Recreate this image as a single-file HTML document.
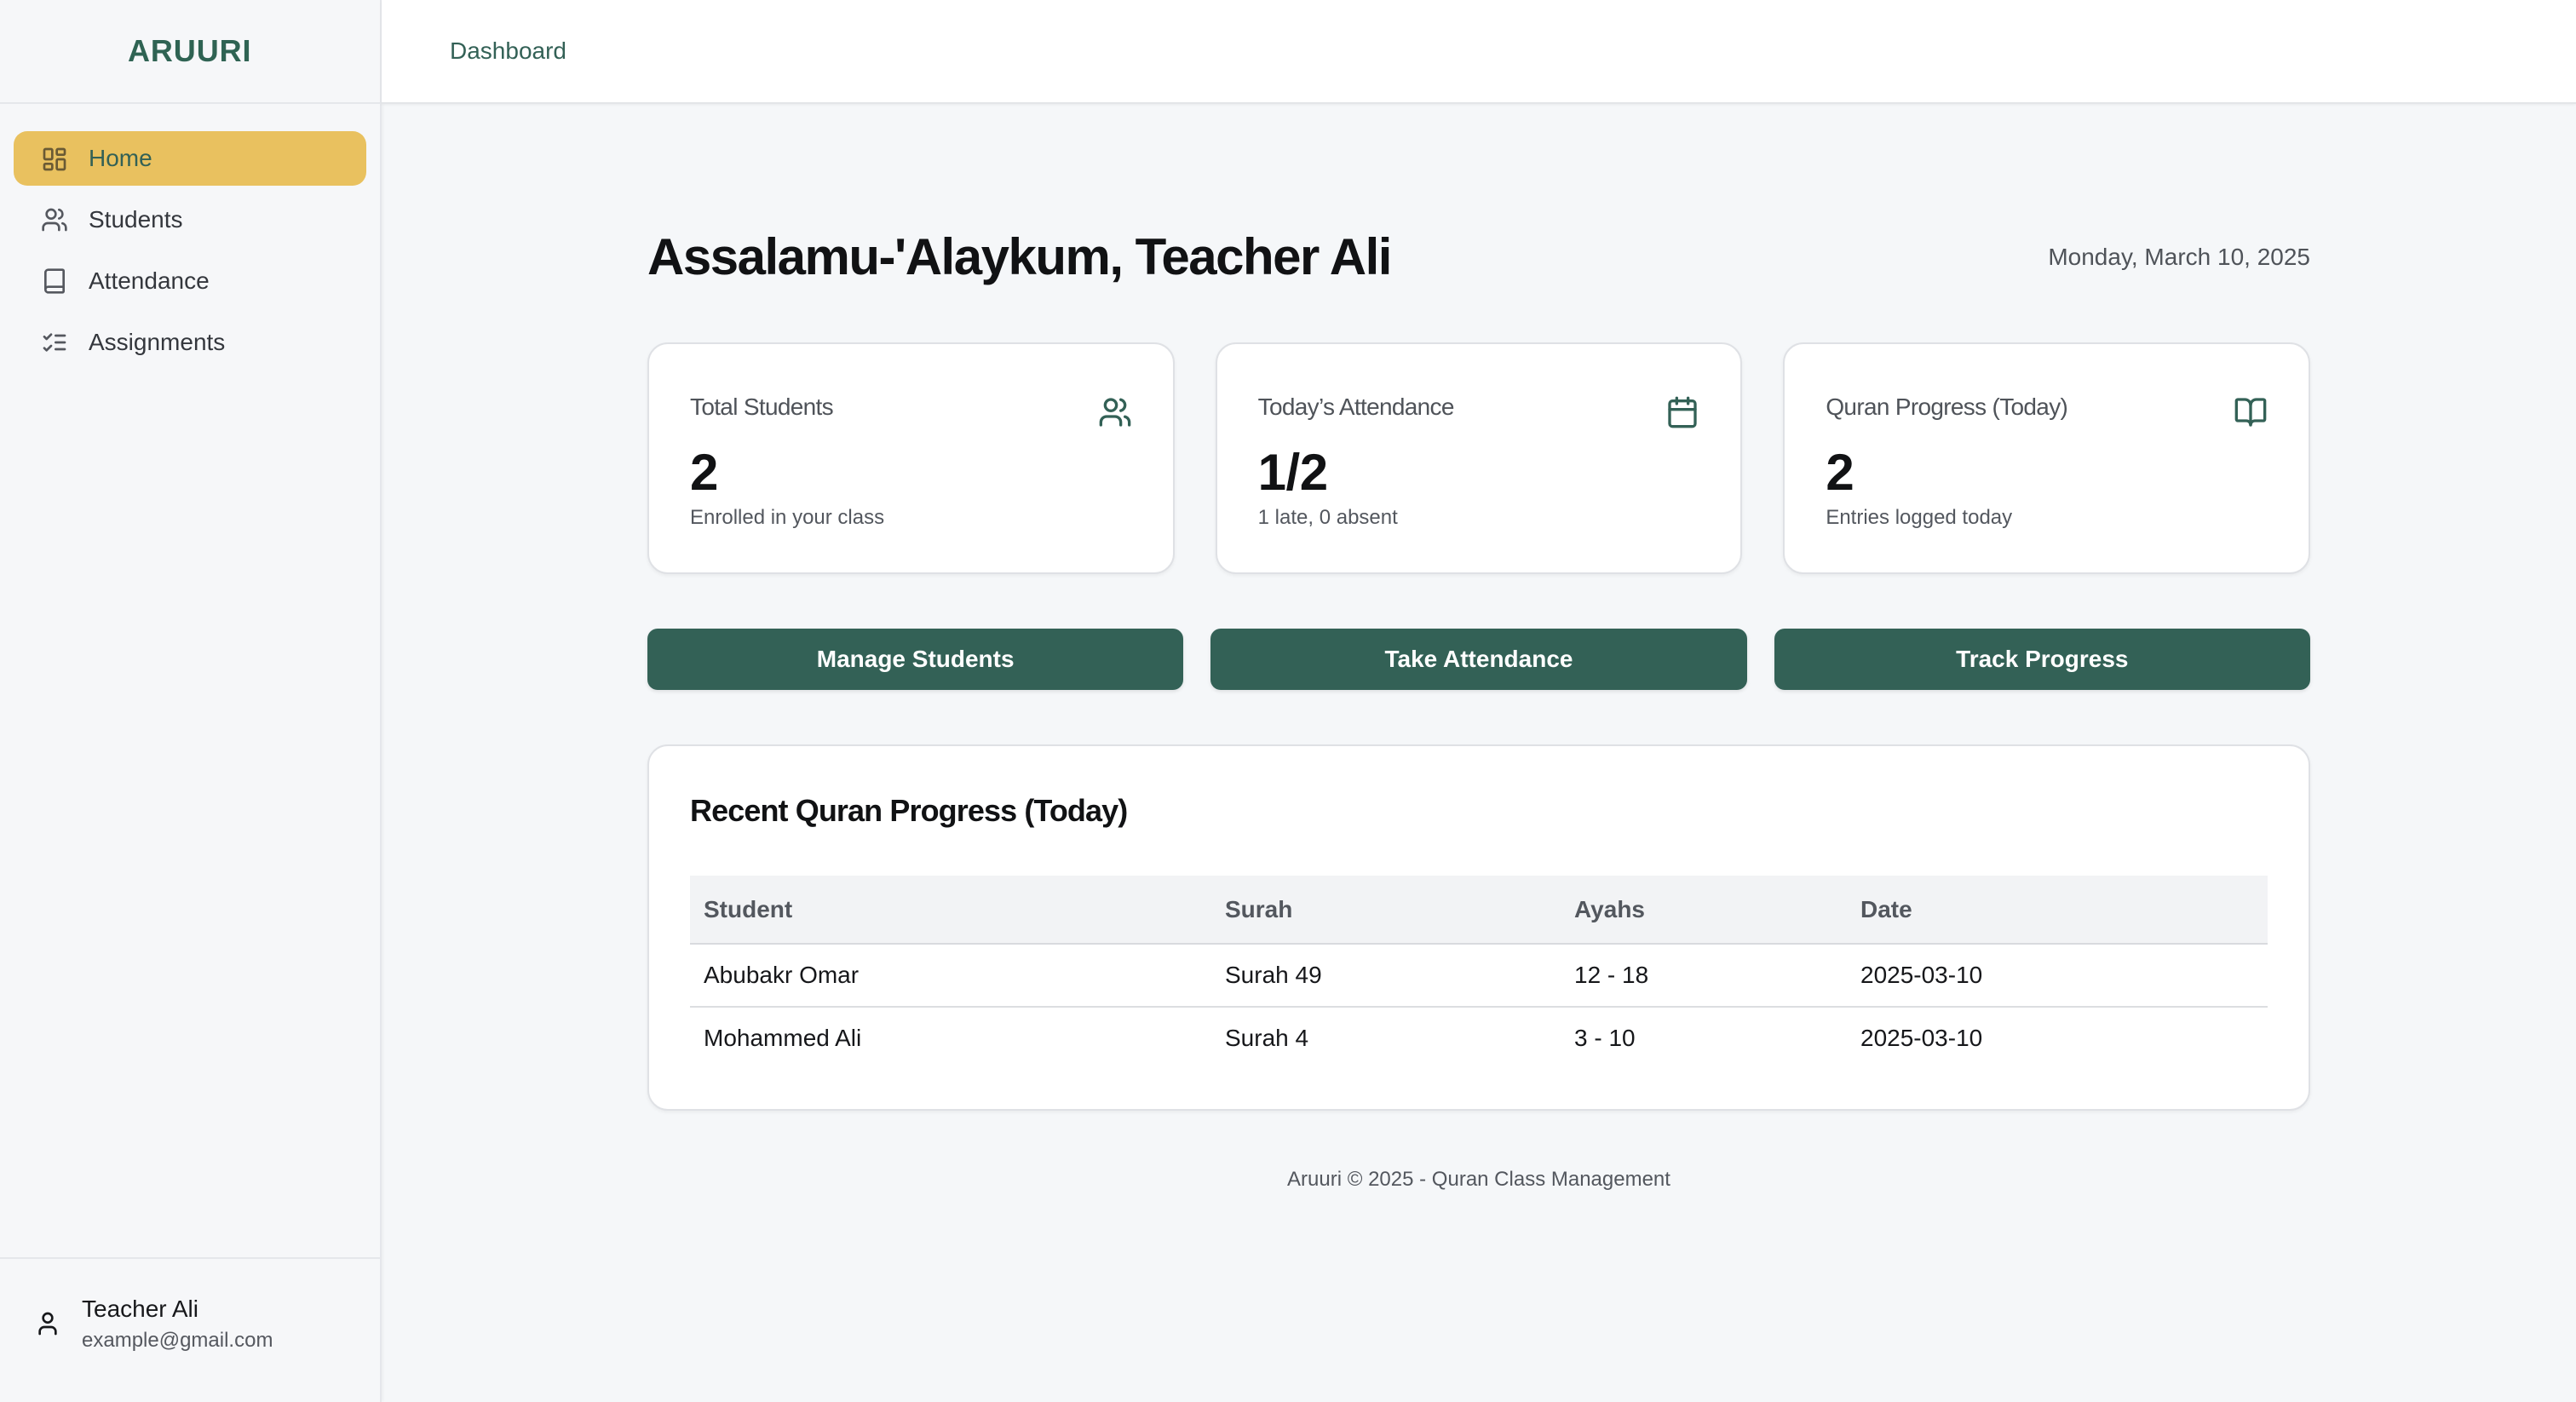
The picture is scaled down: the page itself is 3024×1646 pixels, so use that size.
<!DOCTYPE html>
<html lang="en"><head><meta charset="utf-8"><title>Aruuri</title>
<style>
html,body{margin:0;padding:0;width:3024px;height:1646px;overflow:hidden;background:#f5f7f9}
body{position:relative;font-family:"Liberation Sans",sans-serif;color:#111214}
.a{position:absolute;white-space:nowrap}
.t{position:absolute;white-space:nowrap;line-height:40px;height:40px}
svg{position:absolute;fill:none;stroke:currentColor;stroke-width:2;stroke-linecap:round;stroke-linejoin:round}
.side{left:0;top:0;width:446px;height:1646px;background:#f6f7f9;border-right:2px solid #e5e7eb;box-shadow:2px 0 3px rgba(0,0,0,.03)}
.head{left:448px;top:0;width:2576px;height:120px;background:#fff;border-bottom:2px solid #e3e5e8;box-shadow:0 1px 3px rgba(0,0,0,.06)}
.card{top:402px;width:614.67px;height:268px;background:#fff;border:2px solid #dfe1e5;border-radius:24px;box-shadow:0 2px 4px rgba(0,0,0,.05)}
.btn{top:738px;width:629.33px;height:72px;line-height:72px;background:#336156;border-radius:12px;color:#fff;font-weight:700;font-size:28px;text-align:center;box-shadow:0 2px 4px rgba(0,0,0,.1)}
.n{font-size:28px;color:#34373d}
.lab{font-size:28px;color:#4f5359;letter-spacing:-.68px}
.val{font-size:60px;font-weight:700;color:#111214;line-height:60px;height:60px;letter-spacing:-.5px}
.sub{font-size:24px;color:#53575e}
.th{font-size:28px;font-weight:700;color:#53575e}
.td{font-size:28px;color:#16171a}
.gi{color:#336156}
.ni{color:#55585f}
</style></head><body>
<div class="a side"></div>
<div class="a" style="left:0;top:120px;width:446px;height:2px;background:#e5e7eb"></div>
<div class="a head"></div>
<div class="t" style="left:150px;top:40px;font-size:36px;font-weight:700;color:#2f6353;letter-spacing:.9px">ARUURI</div>
<div class="t" style="left:528px;top:40px;font-size:28px;color:#336156">Dashboard</div>

<div class="a" style="left:16px;top:154px;width:414px;height:64px;background:#e9c15f;border-radius:16px"></div>
<svg style="left:48px;top:170.5px;color:#6a5a34" width="32" height="32" viewBox="0 0 24 24"><rect x="3" y="3" width="7" height="9" rx="1"/><rect x="14" y="3" width="7" height="5" rx="1"/><rect x="14" y="12" width="7" height="9" rx="1"/><rect x="3" y="16" width="7" height="5" rx="1"/></svg>
<div class="t n" style="left:104px;top:166px;color:#336156">Home</div>
<svg class="ni" style="left:48px;top:242px" width="32" height="32" viewBox="0 0 24 24"><path d="M16 21v-2a4 4 0 0 0-4-4H6a4 4 0 0 0-4 4v2"/><circle cx="9" cy="7" r="4"/><path d="M22 21v-2a4 4 0 0 0-3-3.87"/><path d="M16 3.13a4 4 0 0 1 0 7.75"/></svg>
<div class="t n" style="left:104px;top:238px">Students</div>
<svg class="ni" style="left:48px;top:314px" width="32" height="32" viewBox="0 0 24 24"><path d="M4 19.5v-15A2.5 2.5 0 0 1 6.5 2H19a1 1 0 0 1 1 1v18a1 1 0 0 1-1 1H6.5a1 1 0 0 1 0-5H20"/></svg>
<div class="t n" style="left:104px;top:310px">Attendance</div>
<svg class="ni" style="left:48px;top:386px" width="32" height="32" viewBox="0 0 24 24"><path d="m3 17 2 2 4-4"/><path d="m3 7 2 2 4-4"/><path d="M13 6h8"/><path d="M13 12h8"/><path d="M13 18h8"/></svg>
<div class="t n" style="left:104px;top:382px">Assignments</div>

<div class="a" style="left:0;top:1476px;width:446px;height:2px;background:#e5e7eb"></div>
<svg style="left:40px;top:1538px;color:#17181b" width="32" height="32" viewBox="0 0 24 24"><path d="M19 21v-2a4 4 0 0 0-4-4H9a4 4 0 0 0-4 4v2"/><circle cx="12" cy="7" r="4"/></svg>
<div class="t" style="left:96px;top:1517px;font-size:28px;color:#17181b">Teacher Ali</div>
<div class="t" style="left:96px;top:1554px;font-size:24px;color:#55585f">example@gmail.com</div>

<div class="t" style="left:760px;top:271px;font-size:60px;line-height:62px;height:62px;font-weight:700;letter-spacing:-1.5px;color:#111214">Assalamu-'Alaykum, Teacher Ali</div>
<div class="t" style="right:312px;top:282px;font-size:28px;color:#4f5359">Monday, March 10, 2025</div>

<div class="a card" style="left:760px"></div>
<div class="a card" style="left:1426.67px"></div>
<div class="a card" style="left:2093.33px"></div>

<div class="t lab" style="left:810px;top:458px">Total Students</div>
<svg class="gi" style="left:1288.67px;top:464px" width="40" height="40" viewBox="0 0 24 24"><path d="M16 21v-2a4 4 0 0 0-4-4H6a4 4 0 0 0-4 4v2"/><circle cx="9" cy="7" r="4"/><path d="M22 21v-2a4 4 0 0 0-3-3.87"/><path d="M16 3.13a4 4 0 0 1 0 7.75"/></svg>
<div class="t val" style="left:810px;top:525px">2</div>
<div class="t sub" style="left:810px;top:588px">Enrolled in your class</div>

<div class="t lab" style="left:1476.67px;top:458px">Today’s Attendance</div>
<svg class="gi" style="left:1955.33px;top:464px" width="40" height="40" viewBox="0 0 24 24"><path d="M8 2v4"/><path d="M16 2v4"/><rect x="3" y="4" width="18" height="18" rx="2"/><path d="M3 10h18"/></svg>
<div class="t val" style="left:1476.67px;top:525px">1/2</div>
<div class="t sub" style="left:1476.67px;top:588px">1 late, 0 absent</div>

<div class="t lab" style="left:2143.33px;top:458px">Quran Progress (Today)</div>
<svg class="gi" style="left:2622px;top:464px" width="40" height="40" viewBox="0 0 24 24"><path d="M12 7v14"/><path d="M3 18a1 1 0 0 1-1-1V4a1 1 0 0 1 1-1h5a4 4 0 0 1 4 4 4 4 0 0 1 4-4h5a1 1 0 0 1 1 1v13a1 1 0 0 1-1 1h-6a3 3 0 0 0-3 3 3 3 0 0 0-3-3z"/></svg>
<div class="t val" style="left:2143.33px;top:525px">2</div>
<div class="t sub" style="left:2143.33px;top:588px">Entries logged today</div>

<div class="a btn" style="left:760px">Manage Students</div>
<div class="a btn" style="left:1421.33px">Take Attendance</div>
<div class="a btn" style="left:2082.67px">Track Progress</div>

<div class="a" style="left:760px;top:874px;width:1948px;height:426px;background:#fff;border:2px solid #dfe1e5;border-radius:24px;box-shadow:0 2px 4px rgba(0,0,0,.05)"></div>
<div class="t" style="left:810px;top:932px;font-size:36px;font-weight:700;color:#111214;letter-spacing:-.9px">Recent Quran Progress (Today)</div>
<div class="a" style="left:810px;top:1028px;width:1852px;height:79px;background:#f2f3f5"></div>
<div class="a" style="left:810px;top:1107px;width:1852px;height:2px;background:#d8dade"></div>
<div class="a" style="left:810px;top:1181px;width:1852px;height:2px;background:#dcdee1"></div>
<div class="t th" style="left:826px;top:1048px">Student</div>
<div class="t th" style="left:1438px;top:1048px">Surah</div>
<div class="t th" style="left:1848px;top:1048px">Ayahs</div>
<div class="t th" style="left:2184px;top:1048px">Date</div>
<div class="t td" style="left:826px;top:1125px">Abubakr Omar</div>
<div class="t td" style="left:1438px;top:1125px">Surah 49</div>
<div class="t td" style="left:1848px;top:1125px">12 - 18</div>
<div class="t td" style="left:2184px;top:1125px">2025-03-10</div>
<div class="t td" style="left:826px;top:1199px">Mohammed Ali</div>
<div class="t td" style="left:1438px;top:1199px">Surah 4</div>
<div class="t td" style="left:1848px;top:1199px">3 - 10</div>
<div class="t td" style="left:2184px;top:1199px">2025-03-10</div>

<div class="t" style="left:760px;width:1952px;text-align:center;top:1365px;font-size:24px;color:#53575e">Aruuri © 2025 - Quran Class Management</div>
</body></html>
